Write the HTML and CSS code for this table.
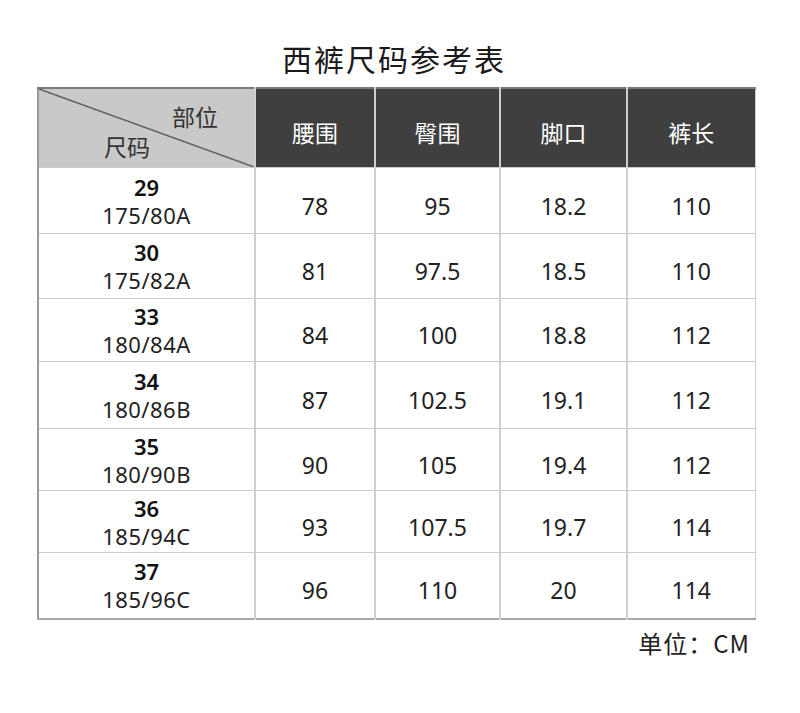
FILE: index.html
```html
<!DOCTYPE html>
<html lang="zh-CN">
<head>
<meta charset="utf-8">
<title>西裤尺码参考表</title>
<link rel="stylesheet" href="styles.css">
</head>
<body>
<div class="page">
  <h1 class="title">西裤尺码参考表</h1>
  <table class="size-table">
    <colgroup>
      <col class="c-size"><col class="c-a"><col class="c-b"><col class="c-c"><col class="c-d">
    </colgroup>
    <thead>
      <tr>
        <th class="corner">
          <div class="corner-inner">
            <span class="corner-top">部位</span>
            <span class="corner-bottom">尺码</span>
          </div>
        </th>
        <th class="head">腰围</th>
        <th class="head">臀围</th>
        <th class="head">脚口</th>
        <th class="head">裤长</th>
      </tr>
    </thead>
    <tbody>
      <tr><td class="size"><b>29</b><span>175/80A</span></td><td>78</td><td>95</td><td>18.2</td><td>110</td></tr>
      <tr><td class="size"><b>30</b><span>175/82A</span></td><td>81</td><td>97.5</td><td>18.5</td><td>110</td></tr>
      <tr><td class="size"><b>33</b><span>180/84A</span></td><td>84</td><td>100</td><td>18.8</td><td>112</td></tr>
      <tr><td class="size"><b>34</b><span>180/86B</span></td><td>87</td><td>102.5</td><td>19.1</td><td>112</td></tr>
      <tr><td class="size"><b>35</b><span>180/90B</span></td><td>90</td><td>105</td><td>19.4</td><td>112</td></tr>
      <tr><td class="size"><b>36</b><span>185/94C</span></td><td>93</td><td>107.5</td><td>19.7</td><td>114</td></tr>
      <tr><td class="size"><b>37</b><span>185/96C</span></td><td>96</td><td>110</td><td>20</td><td>114</td></tr>
    </tbody>
  </table>
  <div class="unit">单位：CM</div>
</div>
</body>
</html>
```
FILE: styles.css
```css
* { box-sizing: border-box; }
html, body { margin: 0; padding: 0; background: #ffffff; }
body {
  font-family: "Noto Sans", "Noto Sans CJK SC", sans-serif;
  color: #222222;
}
.page {
  width: 800px;
  padding-top: 42px;
}
.title {
  margin: 0 0 13px 0;
  height: 32px;
  line-height: 32px;
  text-align: center;
  font-family: "Noto Sans CJK SC", sans-serif;
  font-weight: 400;
  font-size: 30px;
  letter-spacing: 2px;
  padding-right: 12px;
  color: #1a1a1a;
}
.size-table {
  margin-left: 37px;
  width: 717px;
  table-layout: fixed;
  border-collapse: collapse;
  border-left: 2px solid #9a9a9a;
  border-bottom: 2px solid #a8a8a8;
  border-top: 2px solid #7a7a7a;
  border-right: 1px solid #cccccc;
}
.c-size { width: 217px; }
.c-a { width: 120px; }
.c-b { width: 125px; }
.c-c { width: 127px; }
.c-d { width: 128px; }
.size-table thead tr { height: 78px; }
.size-table th {
  padding: 0;
  font-weight: 400;
  border-left: 2px solid #cfcfcf;
}
.size-table th.corner { border-left: none; }
.corner {
  background: linear-gradient(to top right, #c9c9c9 calc(50% - 1.3px), #4f4f4f 50%, #c9c9c9 calc(50% + 1.3px));
  color: #333333;
}
.corner-inner {
  height: 78px;
  display: flex;
  flex-direction: column;
  justify-content: space-between;
  padding: 12px 36px 7px 65px;
  font-family: "Noto Sans CJK SC", sans-serif;
  font-size: 23px;
  line-height: 30px;
}
.corner-top { align-self: flex-end; }
.corner-bottom { align-self: flex-start; }
.head {
  background: #3f3f3f;
  color: #ffffff;
  font-family: "Noto Sans CJK SC", sans-serif;
  font-size: 23px;
  padding-top: 8px !important;
  vertical-align: middle;
  text-align: center;
}
.size-table td {
  border: 1px solid #cccccc;
  border-left: 2px solid #cfcfcf;
  text-align: center;
  vertical-align: middle;
  font-size: 23px;
  padding: 10px 0 0 0;
  color: #222222;
}
.size-table td.size {
  border-left: none;
  padding: 0;
  font-size: 22px;
}
.size b, .size span { display: block; line-height: 30px; }
.size b { font-weight: 600; color: #111111; margin-bottom: -2px; }
.size span { font-weight: 400; letter-spacing: 0.5px; }
.size-table tbody tr:nth-child(1) { height: 66px; }
.size-table tbody tr:nth-child(2) { height: 65px; }
.size-table tbody tr:nth-child(3) { height: 63px; }
.size-table tbody tr:nth-child(4) { height: 67px; }
.size-table tbody tr:nth-child(5) { height: 62px; }
.size-table tbody tr:nth-child(6) { height: 62px; }
.size-table tbody tr:nth-child(7) { height: 66px; }
.unit {
  width: 750px;
  text-align: right;
  margin-top: 8px;
  font-family: "Noto Sans CJK SC", sans-serif;
  font-size: 24px;
  letter-spacing: 1px;
  line-height: 30px;
  color: #222222;
}
```
